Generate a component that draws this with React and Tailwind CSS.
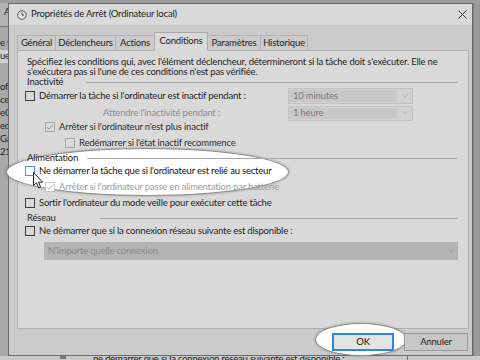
import React from "react";

const font = "font-['Lato','Noto_Sans',sans-serif]";

function Box({ checked = false, tone = "normal" }) {
  const styles = {
    normal: "border-[#3c3c3c] bg-[#d9d9d9]",
    disabled: "border-[#a6a6a6] bg-[#d9d9d9]",
    focus: "border-[#4a90dc] bg-white",
    lit: "border-[#c4c4c4] bg-white",
  };
  return (
    <span className={`flex h-[10px] w-[10px] shrink-0 items-center justify-center border ${styles[tone]}`}>
      {checked && (
        <svg width="8" height="8" viewBox="0 0 8 8">
          <path d="M1 4.2 L3 6.2 L7 1.6" fill="none" stroke={tone === "lit" ? "#b8b8b8" : "#9c9c9c"} strokeWidth="1" />
        </svg>
      )}
    </span>
  );
}

function Chevron({ color }) {
  return (
    <svg width="6" height="4" viewBox="0 0 6 4">
      <path d="M0.5 0.5 L3 3 L5.5 0.5" fill="none" stroke={color} strokeWidth="0.9" />
    </svg>
  );
}

function Group({ label, labelW, lineW, h }) {
  return (
    <div className={`ml-[2px] flex items-center ${h}`}>
      <span className={`${labelW} shrink-0 whitespace-nowrap`}>{label}</span>
      <span className={`h-px ${lineW} bg-[#a6a6a6]`} />
    </div>
  );
}

function Combo({ value, h }) {
  return (
    <div className={`flex w-[125px] ${h} border border-[#c2c2c2] bg-[#d1d1d1]`}>
      <span className="m-px flex flex-1 items-center bg-[#c8c8c8] pl-[3px] text-[#7b7b7b]">{value}</span>
      <span className="flex w-[14px] items-center justify-center">
        <Chevron color="#b0b0b0" />
      </span>
    </div>
  );
}

function Option({ pad, tone, checked, text, label }) {
  return (
    <div className={`flex items-center ${pad}`}>
      <Box tone={tone} checked={checked} />
      <span className={`ml-[4px] whitespace-nowrap ${text}`}>{label}</span>
    </div>
  );
}

const tabs = [
  ["Général", "w-[39px]"],
  ["Déclencheurs", "w-[61px]"],
  ["Actions", "w-[40px]"],
  ["Conditions", "w-[54px]"],
  ["Paramètres", "w-[54px]"],
  ["Historique", "w-[48px]"],
];

function Dialog() {
  return (
    <div className="flex w-[465px] shrink-0 flex-col border border-[#6b6b6b] bg-[#cbcbcb]">
      <div className="flex h-[21px] shrink-0 items-center bg-[#d9d9d9] pl-[8px] pr-[5px]">
        <svg width="10" height="10" viewBox="0 0 10 10">
          <circle cx="5" cy="5" r="4.3" fill="#e2e2e2" stroke="#5a5a5a" strokeWidth="1" />
          <path d="M5 2.4 V5 H7" fill="none" stroke="#333" strokeWidth="0.9" />
        </svg>
        <span className="ml-[4px] whitespace-nowrap">Propriétés de Arrêt (Ordinateur local)</span>
        <svg className="ml-auto" width="9" height="9" viewBox="0 0 9 9">
          <path d="M0.5 0.5 L8.5 8.5 M8.5 0.5 L0.5 8.5" stroke="#333" strokeWidth="0.9" />
        </svg>
      </div>

      <div className="ml-[8px] mt-[7px] flex h-[18px] items-end">
        {tabs.map(([name, w], i) =>
          name === "Conditions" ? (
            <div
              key={name}
              className={`relative -mb-px -ml-px flex h-[19px] ${w} items-center justify-center border border-b-0 border-[#a9a9a9] bg-[#d9d9d9] pb-[2px] whitespace-nowrap`}
            >
              {name}
            </div>
          ) : (
            <div
              key={name}
              className={`flex h-[15px] ${w} items-center justify-center border border-b-0 border-[#b3b3b3] bg-[#cbcbcb] whitespace-nowrap ${i === 0 ? "" : "-ml-px"}`}
            >
              {name}
            </div>
          )
        )}
      </div>

      <div className="ml-[8px] h-[279px] w-[452px] border border-[#b1b1b1] bg-[#d9d9d9]">
        <div className="relative z-10 pl-[7px] pt-[6px]">
          <p className="ml-[2px] h-[10px] whitespace-nowrap leading-[10px]">
            Spécifiez les conditions qui, avec l'élément déclencheur, détermineront si la tâche doit s'exécuter. Elle ne
          </p>
          <p className="ml-[2px] h-[10px] whitespace-nowrap leading-[10px]">
            s'exécutera pas si l'une de ces conditions n'est pas vérifiée.
          </p>
          <Group label="Inactivité" labelW="w-[59px]" lineW="w-[371px]" h="h-[10px]" />

          <div className="flex h-[18px] items-center">
            <div className="w-[263px]">
              <Option pad="" tone="normal" text="" label="Démarrer la tâche si l'ordinateur est inactif pendant :" />
            </div>
            <Combo value="10 minutes" h="h-[16px]" />
          </div>
          <div className="flex h-[16px] items-center">
            <div className="w-[263px] whitespace-nowrap pl-[78px] text-[#8d8d8d]">Attendre l'inactivité pendant :</div>
            <Combo value="1 heure" h="h-[15px]" />
          </div>
          <div className="flex h-[12px] items-center">
            <Option pad="pl-[20px]" tone="disabled" checked text="text-[#2e2e2e]" label="Arrêter si l'ordinateur n'est plus inactif" />
          </div>
          <div className="flex h-[20px] items-center">
            <Option pad="pl-[40px]" tone="disabled" text="text-[#2e2e2e]" label="Redémarrer si l'état inactif recommence" />
          </div>

          <Group label="Alimentation" labelW="w-[60px]" lineW="w-[370px]" h="h-[10px]" />
          <div className="flex h-[16px] items-center">
            <Option pad="" tone="focus" text="text-[#111]" label="Ne démarrer la tâche que si l'ordinateur est relié au secteur" />
          </div>
          <div className="flex h-[16px] items-center">
            <Option pad="pl-[20px]" tone="lit" checked text="text-[#9e9e9e]" label="Arrêter si l'ordinateur passe en alimentation par batterie" />
          </div>
          <div className="flex h-[16px] items-center">
            <Option pad="" tone="normal" text="" label="Sortir l'ordinateur du mode veille pour exécuter cette tâche" />
          </div>

          <Group label="Réseau" labelW="w-[73px]" lineW="w-[357px]" h="h-[14px]" />
          <div className="flex h-[12px] items-center">
            <Option pad="" tone="normal" text="" label="Ne démarrer que si la connexion réseau suivante est disponible :" />
          </div>
          <div className="ml-[19px] mt-[5px] flex h-[18px] w-[414px] items-center justify-between bg-[#b4b4b4] pl-[4px] pr-[4px] text-[#8a8a8a]">
            <span>N'importe quelle connexion</span>
            <Chevron color="#9c9c9c" />
          </div>
        </div>
      </div>

      <div className="mt-[4px] flex justify-end gap-[10px] pr-[4px]">
        <button className="relative z-10 flex h-[18px] w-[62px] items-center justify-center border border-[#2f86dc] bg-[#e3e3e3] text-[#111] shadow-[inset_0_0_0_1px_#2f86dc]">
          OK
        </button>
        <button className="relative z-10 flex h-[18px] w-[64px] items-center justify-center border border-[#9a9a9a] bg-[#c7c7c7]">
          Annuler
        </button>
      </div>
    </div>
  );
}

function BackLeft() {
  const rows = ["of", "ce", "eC", "ed", "Ga", "21-"];
  return (
    <div className="flex w-[8px] shrink-0 flex-col overflow-hidden bg-[#a9a9a9] text-[#262626]">
      <div className="h-[24px] border-b border-[#7a7a7a] bg-[#b4b4b4] pt-[2px] pl-[4px] whitespace-nowrap">Ac</div>
      <div className="h-[10px]" />
      <div className="flex h-[13px] items-center whitespace-nowrap">e t</div>
      <div className="flex h-[13px] items-center whitespace-nowrap bg-[#d0d0d0]">ue</div>
      <div className="h-[18px]" />
      {rows.map((r) => (
        <div key={r} className="flex h-[13px] items-center whitespace-nowrap">
          {r}
        </div>
      ))}
    </div>
  );
}

function BackBottom() {
  return (
    <div className="flex h-[4px] shrink-0 items-start overflow-hidden bg-[#c9c9c9]">
      <div className="w-[60px] shrink-0" />
      <div className="h-[3px] w-[6px] shrink-0 bg-[#777]" />
      <div className="w-[27px] shrink-0" />
      <div className="-mt-[3px] w-[314px] shrink-0 whitespace-nowrap leading-[12px] text-[#222]">
        ne démarrer que si la connexion réseau suivante est disponible :
      </div>
      <div className="h-full w-px bg-[#777]" />
    </div>
  );
}

export default function App() {
  return (
    <div className={`relative flex h-[360px] w-[480px] flex-col overflow-hidden bg-[#b7b7b7] text-[9.5px] tracking-[-0.2px] text-[#1e1e1e] ${font}`}>
      <div className="h-[3px] shrink-0 bg-[#9d9d9d]" />
      <div className="flex h-[353px] shrink-0">
        <BackLeft />
        <Dialog />
        <div className="flex-1 border-l border-[#7d7d7d] bg-[#9a9a9a]" />
      </div>
      <BackBottom />

      <div className="absolute left-[6px] top-[148px] h-[48px] w-[283px] rounded-[50%] border border-[#8e8e8e] bg-white shadow-[0_0_3px_rgba(0,0,0,0.3)]" />
      <div className="absolute left-[315px] top-[323px] h-[33px] w-[92px] rounded-[50%] border border-[#8e8e8e] bg-white shadow-[0_0_3px_rgba(0,0,0,0.3)]" />

      <svg className="absolute left-[33px] top-[172px] z-20" width="11" height="17" viewBox="0 0 11 17">
        <path d="M0.5 0.5 L0.5 13.5 L3.5 10.8 L5.6 15.8 L7.6 15 L5.6 10.2 L9.6 10.2 Z" fill="white" stroke="#222" strokeWidth="1" />
      </svg>
    </div>
  );
}
